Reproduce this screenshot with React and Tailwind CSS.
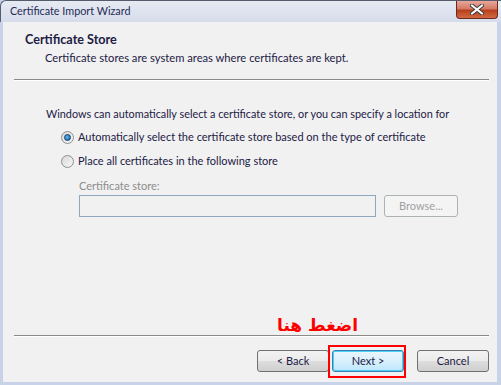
import React from "react";

function Radio({ checked }) {
  return (
    <span className="relative w-[13px] h-[13px] rounded-full border border-[#8e8f8f] bg-gradient-to-br from-[#d9d9d9] to-[#f6f6f6] flex items-center justify-center shrink-0">
      {checked && (
        <span className="w-[7px] h-[7px] rounded-full bg-[radial-gradient(circle_at_40%_40%,#5fb6ea,#1a5a9a)] border border-[#0c3c6e]" />
      )}
    </span>
  );
}

function Button({ children, disabled, focus }) {
  return (
    <button
      className={
        disabled
          ? "w-[74px] h-[22px] rounded-[3px] border border-[#adb2b5] bg-[#f4f4f4] text-[#a0a0a0]"
          : focus
          ? "w-[72px] h-[22px] rounded-[3px] border border-[#3c7fb1] bg-gradient-to-b from-[#eaf6fd] via-[#d9f0fc] to-[#bee6fd] text-[#1c2045] shadow-[inset_0_0_0_1px_#48d1f6]"
          : "w-[72px] h-[22px] rounded-[3px] border border-[#707070] bg-[linear-gradient(#f2f2f2_0%,#ebebeb_50%,#dddddd_51%,#cfcfcf_100%)] text-[#1c2045]"
      }
    >
      {children}
    </button>
  );
}

export default function App() {
  return (
    <div className="w-[501px] h-[385px] flex flex-col bg-[#c8d3ea] text-[11px] text-[#1c2045] font-['Lato',sans-serif] overflow-hidden">
      {/* title bar */}
      <div className="h-[22px] shrink-0 flex items-start justify-between bg-gradient-to-b from-[#e6eaf2] to-[#d6dceb] border-t border-l border-[#555c6c] rounded-tl-[6px]">
        <span className="pl-[9px] pt-[5px] text-[10.8px] text-[#1e2a52] leading-none">Certificate Import Wizard</span>
        <div className="mr-[3px] w-[42px] h-[18px] rounded-b-[4px] border border-t-0 border-[#6b2a20] bg-[linear-gradient(#e8a89a_0%,#d47a66_45%,#b8401f_55%,#d26a40_100%)] flex items-center justify-center">
          <svg width="14" height="11" viewBox="0 0 14 11">
            <path d="M2 1.5 L12 9.5 M12 1.5 L2 9.5" stroke="#3b3b3b" strokeWidth="4" strokeLinecap="round" />
            <path d="M2 1.5 L12 9.5 M12 1.5 L2 9.5" stroke="#ffffff" strokeWidth="2.2" strokeLinecap="round" />
          </svg>
        </div>
      </div>

      {/* client area */}
      <div className="flex-1 ml-[3px] mr-[4px] mb-[3px] bg-[#f1f1f1] flex flex-col">
        <div className="pt-[10px] pl-[22px] flex flex-col gap-[2px]">
          <div className="font-bold text-[12.6px] leading-[16px]">Certificate Store</div>
          <div className="pl-[20px] text-[11.2px] leading-[16px]">Certificate stores are system areas where certificates are kept.</div>
        </div>
        <div className="mt-[13px] ml-[11px] mr-[8px] h-px bg-[#8a8a8a] border-b border-white box-content" />

        <div className="pl-[43px] mt-[25px] text-[10.85px] leading-[16px]">
          Windows can automatically select a certificate store, or you can specify a location for
        </div>
        <div className="pl-[58px] mt-[7px] flex flex-col gap-[8px]">
          <label className="flex items-center gap-[4px] leading-[16px]">
            <Radio checked />
            Automatically select the certificate store based on the type of certificate
          </label>
          <label className="flex items-center gap-[4px] leading-[16px]">
            <Radio />
            Place all certificates in the following store
          </label>
        </div>
        <div className="pl-[76px] mt-[9px] flex flex-col gap-[1px]">
          <div className="text-[#8c8c8c] leading-[16px]">Certificate store:</div>
          <div className="flex items-center gap-[8px]">
            <div className="w-[297px] h-[22px] border border-[#8fa8bd] bg-[#f1f1f1]" />
            <Button disabled>Browse...</Button>
          </div>
        </div>

        <div className="flex-1" />
        <div className="pl-[274px] h-[22px] flex items-end pb-[1px]">
          <span className="text-[#ff0000] text-[17px] font-bold leading-none font-['DejaVu_Sans',sans-serif]">اضغط هنا</span>
        </div>
        <div className="ml-[11px] mr-[8px] h-px bg-[#8a8a8a] border-b border-white box-content" />
        <div className="mt-[13px] mb-[10px] mr-[8px] flex justify-end items-center">
          <Button>&lt; Back</Button>
          <div className="relative ml-[3px]">
            <Button focus>Next &gt;</Button>
            <div className="absolute -left-[4px] -right-[2px] -top-[5px] -bottom-[6px] border-2 border-[#ff0000]" />
          </div>
          <div className="ml-[13px]">
            <Button>Cancel</Button>
          </div>
        </div>
      </div>
    </div>
  );
}
